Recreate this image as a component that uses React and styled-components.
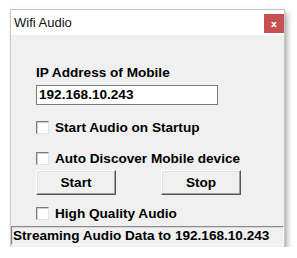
import styled, { createGlobalStyle } from "styled-components";
import { useState } from "react";

const GlobalStyle = createGlobalStyle`
  html, body {
    margin: 0;
    padding: 0;
    background: #ffffff;
  }
`;

const FONT = `"Liberation Sans", Arial, sans-serif`;

const Window = styled.div`
  margin: 10px 0 0 11px;
  width: 273px;
  background: #f0f0f0;
  box-shadow: 1px 1px 1px #9a9a9a, 3px 3px 6px rgba(0, 0, 0, 0.35);
  outline: 1px solid #c8c8c8;
  display: flex;
  flex-direction: column;
`;

const TitleBar = styled.div`
  height: 25px;
  background: #ffffff;
  display: flex;
  align-items: center;
  justify-content: space-between;
  padding: 0 0 0 3px;
`;

const Title = styled.span`
  font-family: ${FONT};
  font-size: 13px;
  color: #111;
`;

const CloseButton = styled.div`
  width: 20px;
  height: 19px;
  margin: 2px 0 0 0;
  background: #c75050;
  color: #fff;
  font-family: "DejaVu Sans", sans-serif;
  font-weight: bold;
  font-size: 9px;
  display: flex;
  align-items: center;
  justify-content: center;
`;

const Body = styled.div`
  padding: 30px 0 0 25px;
  display: flex;
  flex-direction: column;
  align-items: flex-start;
`;

const Label = styled.div`
  font-family: ${FONT};
  font-weight: bold;
  font-size: 13.6px;
  line-height: 16px;
  color: #000;
`;

const TextBox = styled.div`
  margin-top: 4px;
  width: 178px;
  height: 18px;
  background: #fff;
  border: 1px solid #7a7a7a;
  font-family: ${FONT};
  font-weight: bold;
  font-size: 13.6px;
  line-height: 18px;
  padding-left: 2px;
  box-sizing: content-box;
  color: #000;
`;

const CheckRow = styled.label`
  display: flex;
  align-items: center;
  gap: 6px;
  height: 16px;
  margin-top: ${(p) => p.$gap}px;
  font-family: ${FONT};
  font-weight: bold;
  font-size: 13.6px;
  color: #000;
  cursor: default;
`;

const Box = styled.span`
  width: 11px;
  height: 11px;
  background: #fff;
  border-style: solid;
  border-width: 1px;
  border-color: #7a7a7a #e3e3e3 #e3e3e3 #7a7a7a;
  box-shadow: inset 1px 1px 0 #d0d0d0;
  font-size: 10px;
  line-height: 11px;
  text-align: center;
`;

const ButtonRow = styled.div`
  margin-top: 4px;
  display: flex;
  gap: 45px;
`;

const Button = styled.div`
  width: 78px;
  height: 23px;
  background: #f0f0f0;
  border-style: solid;
  border-width: 1px;
  border-color: #ffffff #555555 #555555 #ffffff;
  box-shadow: inset -1px -1px 0 #a0a0a0, inset 1px 1px 0 #e3e3e3;
  display: flex;
  align-items: center;
  justify-content: center;
  font-family: ${FONT};
  font-weight: bold;
  font-size: 13.6px;
  color: #000;
`;

const StatusBar = styled.div`
  margin: 5px 0 2px 0;
  height: 17px;
  border-style: solid;
  border-width: 1px;
  border-color: #8a8a8a #fafafa #fafafa #8a8a8a;
  box-shadow: inset 1px 1px 0 #d8d8d8;
  padding-left: 1px;
  font-family: ${FONT};
  font-weight: bold;
  font-size: 13.6px;
  line-height: 17px;
  color: #000;
  white-space: nowrap;
  overflow: hidden;
`;

function Check({ gap, children }) {
  const [on, setOn] = useState(false);
  return (
    <CheckRow $gap={gap} onClick={() => setOn(!on)}>
      <Box>{on ? "✓" : ""}</Box>
      {children}
    </CheckRow>
  );
}

export default function App() {
  return (
    <>
      <GlobalStyle />
      <Window>
        <TitleBar>
          <Title>Wifi Audio</Title>
          <CloseButton>x</CloseButton>
        </TitleBar>
        <Body>
          <Label>IP Address of Mobile</Label>
          <TextBox>192.168.10.243</TextBox>
          <Check gap={14}>Start Audio on Startup</Check>
          <Check gap={15}>Auto Discover Mobile device</Check>
          <ButtonRow>
            <Button>Start</Button>
            <Button>Stop</Button>
          </ButtonRow>
          <Check gap={10}>High Quality Audio</Check>
        </Body>
        <StatusBar>Streaming Audio Data to 192.168.10.243</StatusBar>
      </Window>
    </>
  );
}
